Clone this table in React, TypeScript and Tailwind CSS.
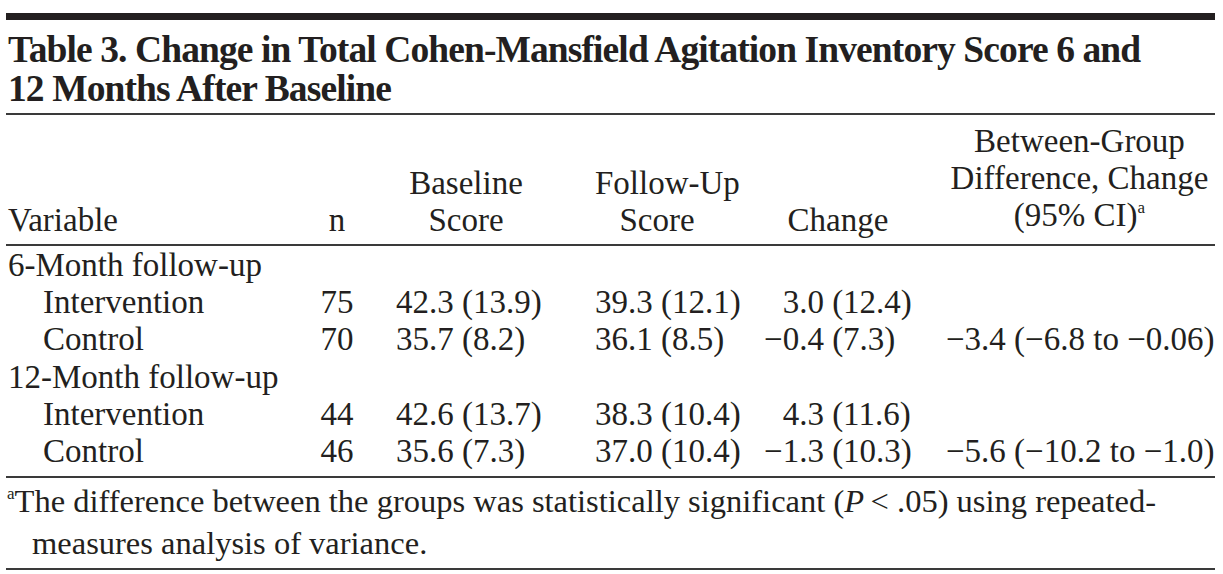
import React from "react";

const cols = "grid grid-cols-[300px_62px_196px_176px_190px_285px]";

const M = "\u2212";

type Row = { label: string; n: string; base: string; fu: string; chg: string; neg: boolean; diff?: string };

const groups: { title: string; rows: Row[] }[] = [
  {
    title: "6-Month follow-up",
    rows: [
      { label: "Intervention", n: "75", base: "42.3 (13.9)", fu: "39.3 (12.1)", chg: "3.0 (12.4)", neg: false },
      { label: "Control", n: "70", base: "35.7 (8.2)", fu: "36.1 (8.5)", chg: "0.4 (7.3)", neg: true, diff: `${M}3.4 (${M}6.8 to ${M}0.06)` },
    ],
  },
  {
    title: "12-Month follow-up",
    rows: [
      { label: "Intervention", n: "44", base: "42.6 (13.7)", fu: "38.3 (10.4)", chg: "4.3 (11.6)", neg: false },
      { label: "Control", n: "46", base: "35.6 (7.3)", fu: "37.0 (10.4)", chg: "1.3 (10.3)", neg: true, diff: `${M}5.6 (${M}10.2 to ${M}1.0)` },
    ],
  },
];

export default function App() {
  return (
    <div
      className="w-[1223px] h-[574px] bg-white text-[#231f20] pt-[13px] pl-[6px] pr-[8px] overflow-hidden"
      style={{ fontFamily: '"Liberation Serif", "Times New Roman", serif' }}
    >
      <div className="h-[7px] bg-[#231f20]" />
      <div className="mt-[10px] mb-[5px] pl-[2px] text-[37.5px] leading-[39px] font-bold tracking-[-0.9px] whitespace-nowrap">
        <div>Table 3. Change in Total Cohen-Mansfield Agitation Inventory Score 6 and</div>
        <div>12 Months After Baseline</div>
      </div>
      <div className="h-[2px] bg-[#3a3a3a]" />

      <div className={`${cols} items-end pt-[8px] pb-[5px] text-[33px] leading-[37px] whitespace-nowrap`}>
        <div className="pl-[2px]">Variable</div>
        <div className="text-center">n</div>
        <div className="pl-[28px]">
          <div className="w-[140px] text-center">
            <div>Baseline</div>
            <div>Score</div>
          </div>
        </div>
        <div className="pl-[31px]">
          <div className="w-[124px] text-center">
            <div>Follow-Up</div>
            <div>Score</div>
          </div>
        </div>
        <div className="pl-[24px]">
          <div className="w-[148px] text-center">Change</div>
        </div>
        <div className="pl-[16px]">
          <div className="w-[267px] text-center">
            <div>Between-Group</div>
            <div>Difference, Change</div>
            <div>
              (95% CI)<span className="relative top-[-13px] text-[17px]">a</span>
            </div>
          </div>
        </div>
      </div>
      <div className="h-[2px] bg-[#3a3a3a]" />

      <div className="pt-[1px] pb-[6px] text-[33px] leading-[37.2px] whitespace-nowrap">
        {groups.map((g) => (
          <React.Fragment key={g.title}>
            <div className="pl-[2px]">{g.title}</div>
            {g.rows.map((r) => (
              <div key={g.title + r.label} className={cols}>
                <div className="pl-[37px]">{r.label}</div>
                <div className="text-center">{r.n}</div>
                <div className="pl-[28px]">{r.base}</div>
                <div className="pl-[31px]">{r.fu}</div>
                <div className="pl-[24px]">
                  <span className={r.neg ? "" : "invisible"}>{M}</span>
                  {r.chg}
                </div>
                <div className="pl-[16px]">{r.diff ?? ""}</div>
              </div>
            ))}
          </React.Fragment>
        ))}
      </div>
      <div className="h-[2px] bg-[#3a3a3a]" />

      <div className="pt-[5px] mb-[7px] pl-[1px] text-[32.5px] leading-[36px] whitespace-nowrap">
        <div>
          <span className="relative top-[-13px] text-[17px]">a</span>
          The difference between the groups was statistically significant (<i>P</i>
          {"\u2009"}&lt; .05) using repeated-
        </div>
        <div className="pl-[25px]">measures analysis of variance.</div>
      </div>
      <div className="h-[2px] bg-[#3a3a3a]" />
    </div>
  );
}
